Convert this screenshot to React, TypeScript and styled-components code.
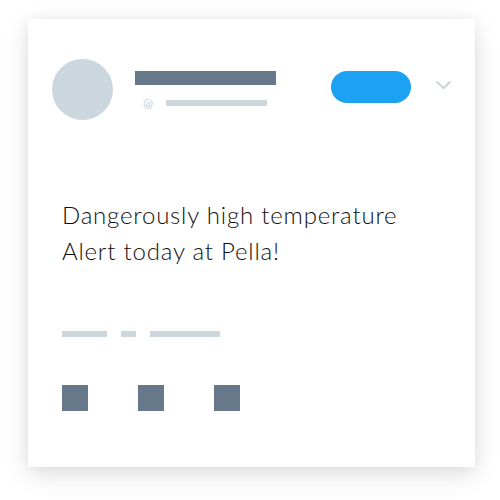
import styled, { createGlobalStyle } from "styled-components";

const GlobalStyle = createGlobalStyle`
  body {
    margin: 0;
    background: #ffffff;
    font-family: "Lato", "Liberation Sans", sans-serif;
  }
`;

const Page = styled.div`
  width: 500px;
  height: 500px;
  box-sizing: border-box;
  padding: 19px 0 0 28px;
`;

const Card = styled.div`
  width: 447px;
  height: 448px;
  box-sizing: border-box;
  background: #ffffff;
  padding: 40px 23px 0 24px;
  box-shadow: 0 8px 24px rgba(0, 0, 0, 0.12), 0 0 12px rgba(0, 0, 0, 0.05);
  display: flex;
  flex-direction: column;
`;

const Header = styled.div`
  display: flex;
  align-items: flex-start;
`;

const Avatar = styled.div`
  width: 61px;
  height: 61px;
  border-radius: 50%;
  background: #ccd6dd;
  flex-shrink: 0;
`;

const Names = styled.div`
  display: flex;
  flex-direction: column;
  margin-left: 22px;
  padding-top: 12px;
`;

const NameBar = styled.div`
  width: 141px;
  height: 14px;
  background: #66788a;
`;

const HandleRow = styled.div`
  display: flex;
  align-items: center;
  margin-top: 12px;
`;

const At = styled.span`
  font-size: 12px;
  line-height: 12px;
  color: #c4ccd2;
  margin-left: 8px;
  width: 23px;
`;

const Bar = styled.div<{ $w: number; $h?: number }>`
  width: ${(p) => p.$w}px;
  height: ${(p) => p.$h ?? 6}px;
  background: #ccd6dd;
`;

const FollowButton = styled.div`
  width: 80px;
  height: 32px;
  border-radius: 16px;
  background: #1da1f2;
  margin: 12px 0 0 auto;
`;

const Chevron = styled.svg`
  margin: 21px 0 0 24px;
`;

const Message = styled.p`
  margin: 77px 0 0 10px;
  font-size: 24px;
  line-height: 36px;
  font-weight: 300;
  letter-spacing: 0.8px;
  color: #111111;
`;

const Meta = styled.div`
  display: flex;
  gap: 14px;
  margin: 62px 0 0 10px;
`;

const Actions = styled.div`
  display: flex;
  gap: 50px;
  margin: 48px 0 0 10px;
`;

const ActionSquare = styled.div`
  width: 26px;
  height: 26px;
  background: #66788a;
`;

export default function App() {
  return (
    <Page>
      <GlobalStyle />
      <Card>
        <Header>
          <Avatar />
          <Names>
            <NameBar />
            <HandleRow>
              <At>@</At>
              <Bar $w={101} />
            </HandleRow>
          </Names>
          <FollowButton />
          <Chevron width="17" height="10" viewBox="0 0 17 10">
            <path d="M1.5 1.5 L8.5 8 L15.5 1.5" fill="none" stroke="#ccd6dd" strokeWidth="2.2" />
          </Chevron>
        </Header>
        <Message>
          Dangerously high temperature
          <br />
          Alert today at Pella!
        </Message>
        <Meta>
          <Bar $w={45} />
          <Bar $w={15} />
          <Bar $w={70} />
        </Meta>
        <Actions>
          <ActionSquare />
          <ActionSquare />
          <ActionSquare />
        </Actions>
      </Card>
    </Page>
  );
}
